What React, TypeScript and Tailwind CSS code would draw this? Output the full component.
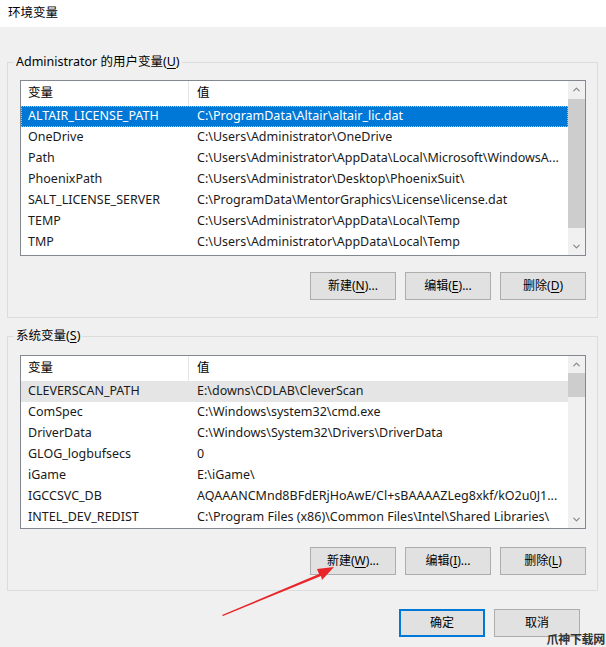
import { ChevronUp, ChevronDown } from "lucide-react";

type Row = [string, string];

const userVars: Row[] = [
  ["ALTAIR_LICENSE_PATH", "C:\\ProgramData\\Altair\\altair_lic.dat"],
  ["OneDrive", "C:\\Users\\Administrator\\OneDrive"],
  ["Path", "C:\\Users\\Administrator\\AppData\\Local\\Microsoft\\WindowsA..."],
  ["PhoenixPath", "C:\\Users\\Administrator\\Desktop\\PhoenixSuit\\"],
  ["SALT_LICENSE_SERVER", "C:\\ProgramData\\MentorGraphics\\License\\license.dat"],
  ["TEMP", "C:\\Users\\Administrator\\AppData\\Local\\Temp"],
  ["TMP", "C:\\Users\\Administrator\\AppData\\Local\\Temp"],
];

const systemVars: Row[] = [
  ["CLEVERSCAN_PATH", "E:\\downs\\CDLAB\\CleverScan"],
  ["ComSpec", "C:\\Windows\\system32\\cmd.exe"],
  ["DriverData", "C:\\Windows\\System32\\Drivers\\DriverData"],
  ["GLOG_logbufsecs", "0"],
  ["iGame", "E:\\iGame\\"],
  ["IGCCSVC_DB", "AQAAANCMnd8BFdERjHoAwE/Cl+sBAAAAZLeg8xkf/kO2u0J1..."],
  ["INTEL_DEV_REDIST", "C:\\Program Files (x86)\\Common Files\\Intel\\Shared Libraries\\"],
];

function Btn({ label, hot, suffix = "", primary = false }: { label: string; hot: string; suffix?: string; primary?: boolean }) {
  return (
    <button
      className={
        "w-[86px] h-[28px] bg-[#e1e1e1] text-[12px] text-black flex items-center justify-center " +
        (primary ? "border-2 border-[#0078d7]" : "border border-[#adadad]")
      }
    >
      {label}
      {hot && (
        <span>
          (<span className="underline underline-offset-2">{hot}</span>)
        </span>
      )}
      {suffix}
    </button>
  );
}

function ScrollBar({ thumb, gap }: { thumb: number; gap?: boolean }) {
  return (
    <div className="w-[17px] bg-[#f0f0f0] flex flex-col">
      <div className="h-[17px] flex items-center justify-center text-[#858585]">
        <ChevronUp size={11} strokeWidth={2.5} />
      </div>
      <div className={"bg-[#cdcdcd] " + (gap ? "mt-px" : "")} style={{ height: thumb }} />
      <div className="flex-1" />
      <div className="h-[17px] flex items-center justify-center text-[#858585]">
        <ChevronDown size={11} strokeWidth={2.5} />
      </div>
    </div>
  );
}

function VarList({ rows, height, thumb, selected, hover }: { rows: Row[]; height: number; thumb: number; selected?: number; hover?: number }) {
  return (
    <div className="border border-[#828790] bg-white flex" style={{ height }}>
      <div className="flex-1 flex flex-col overflow-hidden">
        <div className="h-[25px] flex items-center text-[12.5px] shrink-0">
          <div className="w-[168px] pl-[7px] border-r border-[#e5e5e5] h-full flex items-center">变量</div>
          <div className="pl-[8px]">值</div>
        </div>
        {rows.map(([name, value], i) => {
          const isSel = i === selected;
          const isHover = i === hover;
          return (
            <div
              key={name}
              className={
                "h-[21px] flex items-center text-[12.5px] whitespace-nowrap shrink-0 " +
                (isSel
                  ? "bg-[#0078d7] text-white outline outline-1 outline-dotted outline-[#9cc7f0] -outline-offset-1"
                  : isHover
                  ? "bg-[#e5e5e5] text-[#1a1a1a]"
                  : "text-[#1a1a1a]")
              }
            >
              <div className="w-[168px] pl-[7px]">{name}</div>
              <div className="pl-[8px]">{value}</div>
            </div>
          );
        })}
      </div>
      <ScrollBar thumb={thumb} gap={selected !== undefined} />
    </div>
  );
}

export default function App() {
  return (
    <div
      className="relative w-[606px] h-[647px] bg-[#f0f0f0] overflow-hidden text-black"
      style={{ fontFamily: '"Noto Sans", "Noto Sans CJK SC", sans-serif' }}
    >
      <div className="h-[27px] bg-white pl-[8px] flex items-center text-[12.5px]">环境变量</div>

      <div className="px-[7px] pr-[8px]">
        <fieldset className="mt-[27px] border border-[#dcdcdc] pl-[12px] pr-[11px] pb-[17px]">
          <legend className="-ml-[6px] px-[2px] text-[12.5px] leading-[16px]">
            Administrator 的用户变量(<span className="underline underline-offset-2">U</span>)
          </legend>
          <div className="mt-[10px]">
            <VarList rows={userVars} height={176} thumb={129} selected={0} />
          </div>
          <div className="mt-[16px] flex justify-end gap-[9px]">
            <Btn label="新建" hot="N" suffix="..." />
            <Btn label="编辑" hot="E" suffix="..." />
            <Btn label="删除" hot="D" />
          </div>
        </fieldset>

        <fieldset className="mt-[10px] border border-[#dcdcdc] pl-[12px] pr-[11px] pb-[15px]">
          <legend className="-ml-[6px] px-[2px] text-[12.5px] leading-[16px]">
            系统变量(<span className="underline underline-offset-2">S</span>)
          </legend>
          <div className="mt-[11px]">
            <VarList rows={systemVars} height={174} thumb={24} hover={0} />
          </div>
          <div className="mt-[18px] flex justify-end gap-[9px]">
            <Btn label="新建" hot="W" suffix="..." />
            <Btn label="编辑" hot="I" suffix="..." />
            <Btn label="删除" hot="L" />
          </div>
        </fieldset>

        <div className="mt-[18px] flex justify-end gap-[9px] pr-[18px]">
          <Btn label="确定" hot="" primary />
          <Btn label="取消" hot="" />
        </div>
      </div>

      {/* red annotation arrow */}
      <svg className="absolute left-0 top-0 pointer-events-none" width="606" height="647">
        <polygon points="222,615 319,574 317,569 334,567 322,580 321,576 223,616" fill="#e8262a" />
      </svg>

      {/* watermark */}
      <div className="absolute right-[1px] bottom-0 text-[12px] leading-[14px] font-bold tracking-tight text-[#333]">
        爪神下载网
      </div>
    </div>
  );
}
